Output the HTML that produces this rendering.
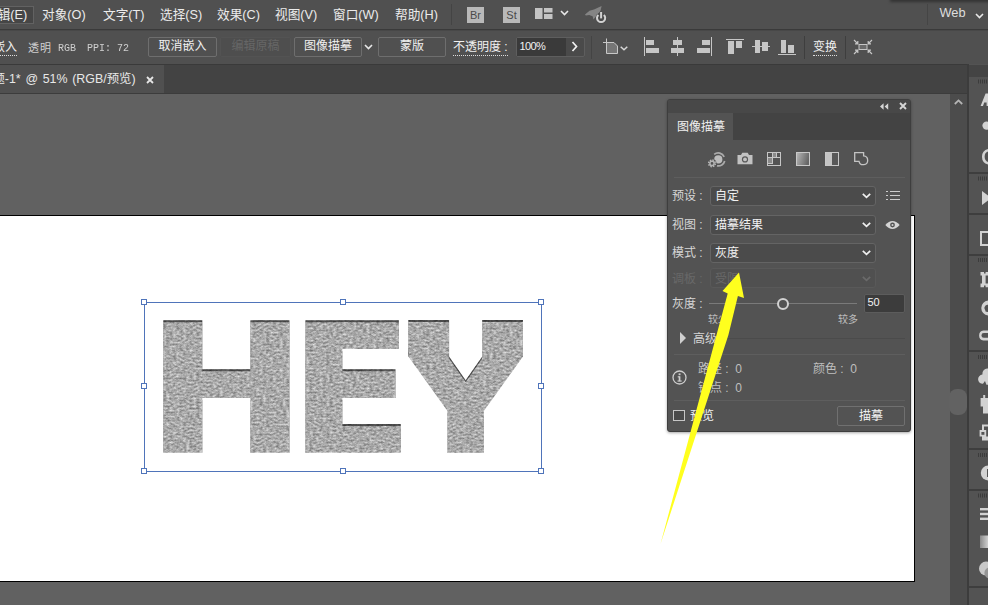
<!DOCTYPE html>
<html lang="zh-CN">
<head>
<meta charset="utf-8">
<title>Illustrator - 图像描摹</title>
<style>
html,body{margin:0;padding:0;}
body{width:988px;height:605px;overflow:hidden;position:relative;background:#616161;
  font-family:"Liberation Sans","Noto Sans CJK SC",sans-serif;font-size:12px;color:#e6e6e6;}
.abs{position:absolute;}
.t{position:absolute;white-space:nowrap;line-height:16px;}
#menubar{left:0;top:0;width:988px;height:29px;background:#505050;}
#ctrlbar{left:0;top:29px;width:988px;height:35px;background:#505050;border-top:1px solid #3a3a3a;box-shadow:inset 0 1px 0 #484848;box-sizing:border-box;}
#tabbar{left:0;top:64px;width:988px;height:30px;background:#434343;border-top:1px solid #3a3a3a;border-bottom:1px solid #3c3c3c;box-sizing:border-box;}
#doctab{left:0;top:65px;width:164px;height:28px;background:#505050;}
.menu{top:6px;font-size:12.7px;color:#ebebeb;line-height:18px;}
.btn{position:absolute;box-sizing:border-box;border:1px solid #6e6e6e;border-radius:2px;text-align:center;color:#f0f0f0;font-size:12px;line-height:17px;height:20px;top:37px;}
.dot{border-bottom:1px dotted #ddd;}
svg{position:absolute;overflow:visible;}
/* artboard */
#artboard{left:-10px;top:215px;width:925px;height:367px;background:#fff;border:1px solid #000;box-sizing:border-box;}
/* right dock */
#vscroll{left:950px;top:94px;width:17px;height:511px;background:#4c4c4c;}
#dock{left:967px;top:64px;width:21px;height:541px;background:#535353;border-left:2px solid #3c3c3c;box-sizing:border-box;}
/* panel */
#panel{left:667px;top:99px;width:244px;height:333px;background:#535353;border:1px solid #3e3e3e;border-radius:3px;box-sizing:border-box;box-shadow:0 1px 3px rgba(0,0,0,.35);}
.pl{color:#d6d6d6;font-size:12px;}
.dd{position:absolute;box-sizing:border-box;left:709.5px;width:166px;height:20px;border:1px solid #646464;border-radius:3px;background:#4b4b4b;}
.sep{position:absolute;height:1px;background:#5e5e5e;left:674px;width:231px;}
</style>
</head>
<body>
<!-- ===== menu bar ===== -->
<div id="menubar" class="abs"></div>
<div class="abs" style="left:-20px;top:5.5px;width:54px;height:18.5px;border:1px solid #626262;box-sizing:border-box;background:#464646;"></div>
<div class="t menu" style="left:-15px;">编辑(E)</div>
<div class="t menu" style="left:42px;">对象(O)</div>
<div class="t menu" style="left:103px;">文字(T)</div>
<div class="t menu" style="left:160px;">选择(S)</div>
<div class="t menu" style="left:217px;">效果(C)</div>
<div class="t menu" style="left:275px;">视图(V)</div>
<div class="t menu" style="left:333px;">窗口(W)</div>
<div class="t menu" style="left:395px;">帮助(H)</div>
<div class="abs" style="left:451px;top:4px;width:1px;height:21px;background:#444;"></div>
<div class="abs" style="left:467px;top:7px;width:17px;height:16px;background:#b9b9b9;color:#4a4a4a;font-size:11px;line-height:16px;text-align:center;">Br</div>
<div class="abs" style="left:503px;top:7px;width:17px;height:16px;background:#b9b9b9;color:#4a4a4a;font-size:11px;line-height:16px;text-align:center;">St</div>
<svg style="left:535px;top:8px;" width="18" height="12"><rect x="0" y="0" width="7.5" height="11" fill="#c4c4c4"/><rect x="9" y="0" width="8.5" height="4.5" fill="#c4c4c4"/><rect x="9" y="6" width="8.5" height="5" fill="#c4c4c4"/></svg>
<svg style="left:560px;top:10px;" width="9" height="6"><path d="M1 1 L4.5 4.5 L8 1" fill="none" stroke="#e8e8e8" stroke-width="1.6"/></svg>
<svg style="left:584px;top:4px;" width="24" height="20" id="rocket"><path d="M1 10.6 L5.5 6.8 L10 5.4 L17.6 2 L16.6 6.5 L12.5 12 L9.4 15.4 L8.6 12.2 L5.2 11 L1.8 11.6 Z" fill="#848484"/><circle cx="17.1" cy="14.2" r="5.6" fill="#4a4a4a"/><path d="M14.4 10.9 A4.1 4.1 0 1 0 19.8 10.9" fill="none" stroke="#d2d2d2" stroke-width="2"/><rect x="16.1" y="8" width="2" height="6.4" fill="#d2d2d2"/></svg>
<div class="abs" style="left:927px;top:4px;width:1px;height:21px;background:#454545;"></div>
<div class="t" style="left:939.5px;top:5px;font-size:12.8px;color:#dedede;">Web</div>
<svg style="left:974.5px;top:12.5px;" width="9" height="6"><path d="M1 1 L4.5 4.5 L8 1" fill="none" stroke="#e8e8e8" stroke-width="1.6"/></svg>
<div class="abs" style="left:890px;top:-4px;width:110px;height:6px;background:#333;filter:blur(1.5px);"></div>

<!-- ===== control bar ===== -->
<div id="ctrlbar" class="abs"></div>
<div class="t dot" style="left:-7px;top:39px;color:#f0f0f0;">嵌入</div>
<div class="t" style="left:28px;top:40px;color:#cfcfcf;font-size:11px;letter-spacing:1px;">透明</div>
<div class="t" style="left:58px;top:40px;color:#cfcfcf;font-size:11.6px;transform:scaleX(.86);transform-origin:0 0;font-family:'Liberation Mono',monospace;">RGB</div>
<div class="t" style="left:86.5px;top:40px;color:#cfcfcf;font-size:11.6px;transform:scaleX(.86);transform-origin:0 0;font-family:'Liberation Mono',monospace;">PPI: 72</div>
<div class="btn" style="left:148px;width:69px;">取消嵌入</div>
<div class="btn" style="left:220px;width:71px;border-color:#535353;color:#666;background:#4e4e4e;">编辑原稿</div>
<div class="btn" style="left:294px;width:68px;">图像描摹</div>
<svg style="left:364px;top:44px;" width="9" height="6"><path d="M1 1 L4.5 4.5 L8 1" fill="none" stroke="#e8e8e8" stroke-width="1.6"/></svg>
<div class="btn" style="left:378px;width:68px;">蒙版</div>
<div class="t dot" style="left:453px;top:39px;color:#f0f0f0;">不透明度 :</div>
<div class="abs" style="left:516px;top:37px;width:69px;height:20px;border:1px solid #5e5e5e;border-radius:2px;box-sizing:border-box;background:#4a4a4a;"></div>
<div class="abs" style="left:517px;top:38px;width:49px;height:18px;background:#3a3a3a;"></div>
<div class="t" style="left:519.5px;top:38px;color:#f2f2f2;font-size:11px;letter-spacing:-0.6px;">100%</div>
<svg style="left:571px;top:41px;" width="7" height="11"><path d="M1.5 1 L5.5 5.5 L1.5 10" fill="none" stroke="#f0f0f0" stroke-width="1.7"/></svg>
<div class="abs" style="left:591px;top:36px;width:1px;height:23px;background:#444;"></div>
<div class="abs" style="left:804px;top:36px;width:1px;height:23px;background:#3e3e3e;"></div>
<div class="abs" style="left:845px;top:36px;width:1px;height:23px;background:#3e3e3e;"></div>

<!-- ctrl icons -->
<svg style="left:600px;top:36px;" width="30" height="22" shape-rendering="crispEdges">
 <path d="M7 7 H14 L17 10 V17 H7 Z" fill="#767676"/>
 <path d="M6.5 2.5 V17.5 H17.5 V10 L14 6.5 H3" fill="none" stroke="#c8c8c8" stroke-width="1" shape-rendering="geometricPrecision"/>
</svg>
<svg style="left:620px;top:46px;" width="8" height="5"><path d="M0.7 0.8 L4 3.8 L7.3 0.8" fill="none" stroke="#d8d8d8" stroke-width="1.5"/></svg>
<svg style="left:640px;top:36px;" width="160" height="22" shape-rendering="crispEdges" fill="#c6c6c6">
 <!-- align left -->
 <rect x="4" y="1" width="1" height="19"/><rect x="6" y="4" width="8" height="5"/><rect x="6" y="12" width="13" height="5"/>
 <!-- align center -->
 <rect x="37" y="1" width="1" height="19"/><rect x="33" y="4" width="9" height="5"/><rect x="31" y="12" width="13" height="5"/>
 <!-- align right -->
 <rect x="71" y="1" width="1" height="19"/><rect x="62" y="4" width="8" height="5"/><rect x="57" y="12" width="13" height="5"/>
 <!-- align top -->
 <rect x="86" y="3" width="18" height="1"/><rect x="88" y="5" width="6" height="13"/><rect x="96" y="5" width="6" height="7"/>
 <!-- align middle -->
 <rect x="112" y="10" width="18" height="1"/><rect x="115" y="4" width="5" height="13"/><rect x="122" y="6" width="6" height="9"/>
 <!-- align bottom -->
 <rect x="138" y="18" width="18" height="1"/><rect x="141" y="4" width="5" height="13"/><rect x="148" y="9" width="6" height="8"/>
</svg>
<svg style="left:854px;top:40px;" width="18" height="14" fill="#c6c6c6">
 <rect x="5" y="4.5" width="8" height="5" fill="#6a6a6a" stroke="#c6c6c6" stroke-width="1"/>
 <path d="M0 0 L3.5 3.5 M1 3.8 H3.8 V1" stroke="#c6c6c6" stroke-width="1.2" fill="none"/>
 <path d="M18 0 L14.5 3.5 M17 3.8 H14.2 V1" stroke="#c6c6c6" stroke-width="1.2" fill="none"/>
 <path d="M0 14 L3.5 10.5 M1 10.2 H3.8 V13" stroke="#c6c6c6" stroke-width="1.2" fill="none"/>
 <path d="M18 14 L14.5 10.5 M17 10.2 H14.2 V13" stroke="#c6c6c6" stroke-width="1.2" fill="none"/>
</svg>

<div class="t dot" style="left:813px;top:39px;color:#f0f0f0;">变换</div>

<!-- ===== tab bar ===== -->
<div id="tabbar" class="abs"></div>
<div id="doctab" class="abs"></div>
<div class="t" style="left:-7.6px;top:71px;font-size:12.4px;word-spacing:1.3px;color:#e8e8e8;">题-1* @ 51% (RGB/预览)</div>
<svg style="left:146px;top:76px;" width="8" height="8"><path d="M1 1 L7 7 M7 1 L1 7" stroke="#e6e6e6" stroke-width="1.8"/></svg>

<!-- ===== canvas ===== -->

<div id="artboard" class="abs"></div>
<svg id="hey" style="left:0;top:0;" width="988" height="605">
 <defs>
  <filter id="yext" filterUnits="userSpaceOnUse" x="408.5" y="312" width="114" height="141">
   <feOffset in="SourceGraphic" dx="0" dy="0" x="398" y="356" width="136" height="1" result="slice"/>
   <feTile in="slice" x="398" y="320.5" width="136" height="36" result="ext"/>
   <feMerge><feMergeNode in="ext"/><feMergeNode in="SourceGraphic"/></feMerge>
  </filter>
  <filter id="noise" filterUnits="userSpaceOnUse" x="140" y="300" width="410" height="180" color-interpolation-filters="sRGB">
   <feTurbulence type="fractalNoise" baseFrequency="0.3 0.5" numOctaves="2" seed="11" result="n"/>
   <feColorMatrix in="n" type="matrix" values="0.6 0 0 0 0.365  0.6 0 0 0 0.365  0.6 0 0 0 0.365  0 0 0 0 1" result="g"/>
   <feComposite in="g" in2="SourceAlpha" operator="in" result="tex"/>
   <feOffset in="SourceAlpha" dx="0" dy="1.6" result="sh"/>
   <feComposite in="SourceAlpha" in2="sh" operator="out" result="edge"/>
   <feFlood flood-color="#000" flood-opacity="0.55"/><feComposite in2="edge" operator="in" result="edgec"/>
   <feMerge><feMergeNode in="tex"/><feMergeNode in="edgec"/></feMerge>
  </filter>
 </defs>
 <g font-family="'DejaVu Sans','Liberation Sans',sans-serif" font-weight="bold" fill="#a8a8a8" stroke="#a8a8a8" stroke-linejoin="miter" filter="url(#noise)">
  <text id="tH" transform="translate(148,451) scale(1.07,1.01)" x="0" y="0" font-size="175" stroke-width="3.5">H</text>
  <text id="tE" transform="translate(291,451) scale(1.011,1.01)" x="0" y="0" font-size="175" stroke-width="3.5">E</text>
  <g filter="url(#yext)"><text id="tY" transform="translate(416.5,447.6) scale(0.97,0.885)" x="0" y="0" font-size="140" stroke-width="11">Y</text></g>
 </g>
 <g fill="none" stroke="#4f74ba" stroke-width="1" shape-rendering="crispEdges">
  <rect x="144.5" y="302.5" width="397" height="169"/>
  <g fill="#fff">
   <rect x="141.5" y="299.5" width="5" height="5"/><rect x="340.5" y="299.5" width="5" height="5"/><rect x="538.5" y="299.5" width="5" height="5"/>
   <rect x="141.5" y="383.5" width="5" height="5"/><rect x="538.5" y="383.5" width="5" height="5"/>
   <rect x="141.5" y="468.5" width="5" height="5"/><rect x="340.5" y="468.5" width="5" height="5"/><rect x="538.5" y="468.5" width="5" height="5"/>
  </g>
 </g>
</svg>

<div id="vscroll" class="abs"></div>
<svg style="left:954px;top:99px;" width="9" height="6"><path d="M0.8 5 L4.5 1.4 L8.2 5" fill="none" stroke="#b4b4b4" stroke-width="1.8"/></svg>
<div class="abs" style="left:949px;top:388.5px;width:18px;height:26px;border-radius:8px;background:#626262;"></div>
<div id="dock" class="abs"></div>
<div class="abs" style="left:969px;top:65px;width:19px;height:12px;background:#444;"></div>
<!-- dock group separators -->
<div class="abs" style="left:969px;top:172px;width:19px;height:2px;background:#3e3e3e;"></div>
<div class="abs" style="left:969px;top:213px;width:19px;height:2px;background:#3e3e3e;"></div>
<div class="abs" style="left:969px;top:254px;width:19px;height:2px;background:#3e3e3e;"></div>
<div class="abs" style="left:969px;top:350px;width:19px;height:2px;background:#3e3e3e;"></div>
<div class="abs" style="left:969px;top:448px;width:19px;height:2px;background:#3e3e3e;"></div>
<div class="abs" style="left:969px;top:489px;width:19px;height:2px;background:#3e3e3e;"></div>
<div class="abs" style="left:969px;top:586px;width:19px;height:2px;background:#3e3e3e;"></div>
<svg style="left:968px;top:0;" width="20" height="605" id="dockicons">
 <g fill="#3c3c3c">
  <rect x="10" y="79.5" width="1" height="4"/>
  <rect x="12" y="79.5" width="1" height="4"/>
  <rect x="14" y="79.5" width="1" height="4"/>
  <rect x="16" y="79.5" width="1" height="4"/>
  <rect x="18" y="79.5" width="1" height="4"/>
  <rect x="10" y="176.5" width="1" height="4"/>
  <rect x="12" y="176.5" width="1" height="4"/>
  <rect x="14" y="176.5" width="1" height="4"/>
  <rect x="16" y="176.5" width="1" height="4"/>
  <rect x="18" y="176.5" width="1" height="4"/>
  <rect x="10" y="258.0" width="1" height="4"/>
  <rect x="12" y="258.0" width="1" height="4"/>
  <rect x="14" y="258.0" width="1" height="4"/>
  <rect x="16" y="258.0" width="1" height="4"/>
  <rect x="18" y="258.0" width="1" height="4"/>
  <rect x="10" y="355.0" width="1" height="4"/>
  <rect x="12" y="355.0" width="1" height="4"/>
  <rect x="14" y="355.0" width="1" height="4"/>
  <rect x="16" y="355.0" width="1" height="4"/>
  <rect x="18" y="355.0" width="1" height="4"/>
  <rect x="10" y="453.0" width="1" height="4"/>
  <rect x="12" y="453.0" width="1" height="4"/>
  <rect x="14" y="453.0" width="1" height="4"/>
  <rect x="16" y="453.0" width="1" height="4"/>
  <rect x="18" y="453.0" width="1" height="4"/>
  <rect x="10" y="493.5" width="1" height="4"/>
  <rect x="12" y="493.5" width="1" height="4"/>
  <rect x="14" y="493.5" width="1" height="4"/>
  <rect x="16" y="493.5" width="1" height="4"/>
  <rect x="18" y="493.5" width="1" height="4"/>
 </g>
 <g fill="#d2d2d2" stroke="none">
  <path d="M12.6 106 L17.6 93.5 H20 V106 H18.6 V102.6 H16.2 L15 106 Z"/>
  <circle cx="18.6" cy="125.6" r="4.2"/>
  <path d="M20 149 A8 8 0 0 0 20 164.5 V162 A4.6 5.4 0 0 1 20 151.6 Z M20 149 h1 v16 h-1 Z"/>
  <path d="M14 191 L20 195.4 V200.6 L14 205 Z"/>
  <path d="M12 231 H20 V233 H14 V244 H20 V246 H12 Z"/>
  <path d="M12.5 272 h3.5 v1.6 h1.6 v-1.6 h2.4 v3.6 h-2.4 v8 h2.4 v3.6 h-2.4 v-1.6 h-1.6 v1.6 h-3.5 v-3.6 h1.5 v-8 h-1.5 Z"/>
  <path d="M20 300.5 A7.6 7.6 0 0 0 20 315.6 Z"/>
  <path d="M20 330.5 H15.4 A5 5 0 0 0 15.4 340.4 H20 V337.8 H15.8 A2.3 2.3 0 0 1 15.8 333.1 H20 Z"/>
  <path d="M20 368.6 A5 5 0 0 0 14.4 374.6 A4.6 4.6 0 0 0 15 383.8 L17 381 L18.4 384.7 H20 Z"/>
  <path d="M12.6 398 h2.6 v-3 h2 v3 h2.8 v15.4 h-5 v-7 h-2.4 Z"/>
  <path d="M14 424.5 h6 v2 h-4 v4.6 h-2 Z M11.6 430 h6.6 v6.4 h1.8 v4 h-6 v-4 h-2.4 Z"/>
  <circle cx="20.3" cy="473" r="7.5"/>
  <rect x="12" y="508" width="8" height="2.4"/><rect x="12" y="512.8" width="8" height="2.4"/><rect x="12" y="517.6" width="8" height="2.4"/>
 </g>
 <g fill="#535353">
  <path d="M20 304 A4 4 0 0 0 20 312 Z" />
  <rect x="13.4" y="432" width="3" height="2.8"/>
  <rect x="19" y="469" width="1.6" height="8"/>
 </g>
 <path d="M20 304 A4 4 0 0 0 17 311" fill="none" stroke="#d2d2d2" stroke-width="1.6"/>
 <defs><linearGradient id="gd" x1="0" y1="0" x2="1" y2="0"><stop offset="0" stop-color="#8a8a8a"/><stop offset="1" stop-color="#d0d0d0"/></linearGradient></defs>
 <rect x="12" y="535.5" width="8" height="12.5" fill="url(#gd)"/>
 <circle cx="18" cy="568.6" r="7" fill="#c8c8c8"/><circle cx="22" cy="573" r="5.6" fill="#959595"/>
</svg>

<!-- ===== panel ===== -->

<div id="panel" class="abs"></div>
<div class="abs" style="left:668px;top:100px;width:242px;height:13px;background:#484848;border-radius:2px 2px 0 0;"></div>
<div class="abs" style="left:668px;top:113px;width:242px;height:27px;background:#434343;"></div>
<div class="abs" style="left:668px;top:113px;width:65px;height:28px;background:#535353;"></div>
<div class="t" style="left:677px;top:119px;font-size:12px;color:#f0f0f0;">图像描摹</div>
<svg style="left:880px;top:103px;" width="9" height="7" fill="#d6d6d6"><path d="M0 3.5 L3.6 0.3 V6.7 Z M4.6 3.5 L8.2 0.3 V6.7 Z"/></svg>
<svg style="left:899px;top:102px;" width="8" height="8"><path d="M1 1 L7 7 M7 1 L1 7" stroke="#d6d6d6" stroke-width="1.9"/></svg>
<!-- icon row -->
<svg style="left:707px;top:151.6px;" width="18" height="16" id="ic1">
 <circle cx="11.3" cy="7.4" r="4.1" fill="#bdbdbd"/>
 <path d="M7.2 2.3 A6.5 6.5 0 0 1 17.2 4.8 M17.7 9 A6.5 6.5 0 0 1 10 13.8" fill="none" stroke="#ababab" stroke-width="1.7"/>
 <circle cx="5" cy="11.4" r="4.6" fill="#535353"/>
 <circle cx="5" cy="11.4" r="3.3" fill="none" stroke="#b4b4b4" stroke-width="1.6" stroke-dasharray="1.5 1.09"/>
 <circle cx="5" cy="11.4" r="2.1" fill="none" stroke="#b4b4b4" stroke-width="1.5"/>
</svg>
<svg style="left:737px;top:152px;" width="16" height="13" id="ic2">
 <path d="M0.5 3 H4 L5.3 0.8 H10.7 L12 3 H15.5 V12.2 H0.5 Z" fill="#c2c2c2"/>
 <circle cx="8" cy="7.4" r="3.1" fill="#585858"/><circle cx="8" cy="7.4" r="1.9" fill="#c2c2c2"/>
</svg>
<svg style="left:767px;top:152px;" width="14" height="14" id="ic3" shape-rendering="crispEdges">
 <rect x="5" y="1" width="5" height="4" fill="#8a8a8a"/><rect x="1" y="5" width="4" height="6" fill="#8a8a8a"/>
 <rect x="0.5" y="0.5" width="13" height="13" fill="none" stroke="#c6c6c6"/>
 <path d="M5.5 0.5 V11.5 M9.5 0.5 V5.5 M0.5 5.5 H13.5 M0.5 11.5 H5.5" fill="none" stroke="#c6c6c6"/>
</svg>
<svg style="left:796px;top:152px;" width="14" height="14" id="ic4">
 <defs><linearGradient id="g4" x1="0" y1="0" x2="1" y2="0.3"><stop offset="0" stop-color="#b8b8b8"/><stop offset="1" stop-color="#666"/></linearGradient></defs>
 <rect x="0.5" y="0.5" width="13" height="13" fill="url(#g4)" stroke="#c8c8c8"/>
</svg>
<svg style="left:825px;top:152px;" width="14" height="14" id="ic5" shape-rendering="crispEdges">
 <rect x="0.5" y="0.5" width="13" height="13" fill="#585858" stroke="#c8c8c8"/>
 <rect x="1" y="1" width="6" height="12" fill="#c4c4c4"/>
</svg>
<svg style="left:854px;top:152px;" width="14" height="14" id="ic6">
 <path d="M0.7 0.7 H9.6 V3.9 A4.4 4.4 0 1 1 5 9.3 H0.7 Z" fill="none" stroke="#c4c4c4" stroke-width="1.3"/>
</svg>
<div class="sep" style="top:177px;"></div>
<!-- rows -->
<div class="t pl" style="left:672px;top:188px;">预设 :</div>
<div class="dd" style="top:185.5px;"></div>
<div class="t" style="left:715px;top:188px;color:#f2f2f2;">自定</div>
<svg style="left:862px;top:193px;" width="9" height="6"><path d="M0.8 0.8 L4.5 4.4 L8.2 0.8" fill="none" stroke="#f0f0f0" stroke-width="1.7"/></svg>
<svg style="left:886px;top:191px;" width="14" height="9" shape-rendering="crispEdges" fill="#cccccc"><rect x="0" y="0" width="2" height="1"/><rect x="4" y="0" width="10" height="1"/><rect x="0" y="4" width="2" height="1"/><rect x="4" y="4" width="10" height="1"/><rect x="0" y="8" width="2" height="1"/><rect x="4" y="8" width="10" height="1"/></svg>
<div class="t pl" style="left:672px;top:217px;">视图 :</div>
<div class="dd" style="top:214.5px;"></div>
<div class="t" style="left:715px;top:217px;color:#f2f2f2;">描摹结果</div>
<svg style="left:862px;top:222px;" width="9" height="6"><path d="M0.8 0.8 L4.5 4.4 L8.2 0.8" fill="none" stroke="#f0f0f0" stroke-width="1.7"/></svg>
<svg style="left:885px;top:220px;" width="15" height="10"><path d="M0.3 5 Q7.5 -3 14.7 5 Q7.5 13 0.3 5 Z" fill="#d4d4d4"/><circle cx="7.5" cy="5" r="2.4" fill="#535353"/><circle cx="7.5" cy="5" r="1" fill="#d4d4d4"/></svg>
<div class="t pl" style="left:672px;top:245px;">模式 :</div>
<div class="dd" style="top:242.5px;"></div>
<div class="t" style="left:715px;top:245px;color:#f2f2f2;">灰度</div>
<svg style="left:862px;top:250px;" width="9" height="6"><path d="M0.8 0.8 L4.5 4.4 L8.2 0.8" fill="none" stroke="#f0f0f0" stroke-width="1.7"/></svg>
<div class="t pl" style="left:672px;top:271px;color:#686868;">调板 :</div>
<div class="dd" style="top:268px;height:20px;border-color:#595959;background:#505050;"></div>
<div class="t" style="left:715px;top:271px;color:#686868;">受限</div>
<svg style="left:862px;top:276px;" width="9" height="6"><path d="M0.8 0.8 L4.5 4.4 L8.2 0.8" fill="none" stroke="#6a6a6a" stroke-width="1.7"/></svg>
<!-- slider -->
<div class="t pl" style="left:672px;top:296px;">灰度 :</div>
<div class="abs" style="left:709px;top:303px;width:148px;height:1px;background:#7a7a7a;"></div>
<div class="abs" style="left:776.8px;top:297.6px;width:12px;height:12px;box-sizing:border-box;border:2px solid #d2d2d2;border-radius:50%;background:#535353;"></div>
<div class="abs" style="left:864px;top:294px;width:41px;height:19px;box-sizing:border-box;border:1px solid #5c5c5c;border-radius:2px;background:#3c3c3c;"></div>
<div class="t" style="left:867.5px;top:294px;color:#f2f2f2;font-size:11px;">50</div>
<div class="t" style="left:708px;top:312px;color:#bdbdbd;font-size:10px;">较少</div>
<div class="t" style="left:838px;top:312px;color:#bdbdbd;font-size:10px;">较多</div>
<svg style="left:680px;top:332px;" width="6" height="12"><path d="M0 0 L6 6 L0 12 Z" fill="#cfcfcf"/></svg>
<div class="t pl" style="left:693px;top:331px;">高级</div>
<div class="abs" style="left:720px;top:338px;width:185px;height:1px;background:#4b4b4b;"></div>
<div class="sep" style="top:354px;"></div>
<svg style="left:672px;top:370px;" width="15" height="15"><circle cx="7.5" cy="7.5" r="6.5" fill="none" stroke="#cdcdcd" stroke-width="1.3"/><rect x="6.7" y="6.3" width="1.7" height="5" fill="#cdcdcd"/><rect x="5.7" y="6.3" width="2" height="1.1" fill="#cdcdcd"/><rect x="5.5" y="10.5" width="4.2" height="1.1" fill="#cdcdcd"/><rect x="6.6" y="3.4" width="1.9" height="1.8" fill="#cdcdcd"/></svg>
<div class="t" style="left:698px;top:361px;color:#bfbfbf;">路径 :&nbsp; 0</div>
<div class="t" style="left:813px;top:361px;color:#bfbfbf;">颜色 :&nbsp; 0</div>
<div class="t" style="left:698px;top:380px;color:#bfbfbf;">锚点 :&nbsp; 0</div>
<div class="sep" style="top:400px;"></div>
<div class="abs" style="left:673px;top:410px;width:12px;height:11px;box-sizing:border-box;border:1px solid #c6c6c6;background:#4a4a4a;"></div>
<div class="t" style="left:690px;top:408px;color:#f2f2f2;">预览</div>
<div class="abs" style="left:837px;top:406px;width:68px;height:20px;box-sizing:border-box;border:1px solid #707070;border-radius:2px;color:#f4f4f4;text-align:center;line-height:18px;font-size:12px;">描摹</div>


<!-- yellow arrow -->
<svg style="left:0;top:0;" width="988" height="605"><path d="M739 272.5 L722.5 291 L727.7 293.6 L716.5 335 L660.5 544 L728.4 335 L737.9 296 L744 298 Z" fill="#ffff1e"/></svg>
</body>
</html>
